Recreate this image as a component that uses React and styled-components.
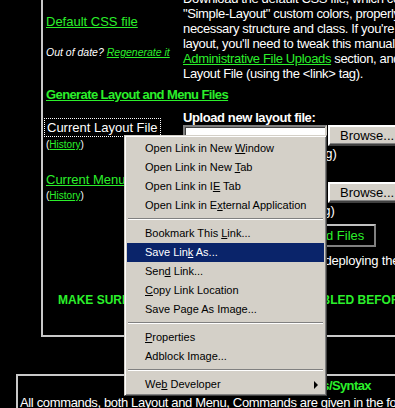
import React from 'react';
import styled, {createGlobalStyle} from 'styled-components';

const green = '#2bef2b';

const Global = createGlobalStyle`
  html, body { margin: 0; padding: 0; background: #000; }
  body {
    width: 395px;
    height: 408px;
    overflow: hidden;
    font-family: "Liberation Sans", Arial, sans-serif;
    font-size: 13px;
    color: #fff;
  }
`;

const Page = styled.div`
  position: relative;
  width: 395px;
  height: 408px;
  overflow: hidden;
`;

const Scroller = styled.div`
  margin-top: -9px;
`;

const Panel = styled.div`
  margin-left: 41px;
  width: 640px;
  border-left: 2px solid #c8c8c8;
  border-bottom: 2px solid #c8c8c8;
  padding: 0 0 27px 3px;
  line-height: 15px;
`;

const Row = styled.div`
  display: grid;
  grid-template-columns: 137px 1fr;
  align-items: ${p => p.$align || 'center'};
  margin-top: ${p => p.$top || 0}px;
`;

const Cell = styled.div`
  display: flex;
  flex-direction: column;
  align-items: flex-start;
  margin-top: ${p => p.$top || 0}px;
`;

const Link = styled.a`
  color: ${green};
  text-decoration: underline;
  cursor: pointer;
`;

const Para = styled.p`
  margin: 0;
  letter-spacing: -0.35px;
`;

const Small = styled.div`
  font-size: ${p => (p.$italic ? 10.5 : 10)}px;
  line-height: 12px;
  margin-top: ${p => p.$top || 0}px;
  font-style: ${p => (p.$italic ? 'italic' : 'normal')};
`;

const Heading = styled.div`
  margin-top: ${p => p.$top || 0}px;
  font-weight: bold;
  letter-spacing: -0.6px;
  padding-left: ${p => p.$indent || 0}px;
  color: ${green};
  text-decoration: ${p => (p.$plain ? 'none' : 'underline')};
`;

const Label = styled.div`
  font-weight: bold;
  letter-spacing: -0.4px;
`;

const FocusLabel = styled.span`
  outline: 1px dotted #fff;
  outline-offset: 1px;
  padding: 0 1px;
`;

const FileField = styled.div`
  display: flex;
  height: 21px;
`;

const FileInput = styled.div`
  box-sizing: border-box;
  width: 144px;
  height: 21px;
  background: #fff;
  border: 2px solid;
  border-color: #808080 #d4d0c8 #d4d0c8 #808080;
  box-shadow: inset 1px 1px 0 #404040;
`;

const Browse = styled.button`
  box-sizing: border-box;
  width: 72px;
  height: 21px;
  margin-left: 1px;
  padding: 0 0 0 10px;
  text-align: left;
  font: 13px "Liberation Sans", Arial, sans-serif;
  color: #000;
  background: #d4d0c8;
  border: 2px solid;
  border-color: #fff #404040 #404040 #fff;
  box-shadow: inset -1px -1px 0 #808080;
`;

const Note = styled.div`
  line-height: 15px;
  letter-spacing: ${p => (p.$tight ? '-0.2px' : 'normal')};
  white-space: nowrap;
`;

const SubmitButton = styled.button`
  box-sizing: border-box;
  margin: 0 0 0 97px;
  height: 23px;
  padding: 0 10px;
  font: 13px "Liberation Sans", Arial, sans-serif;
  color: ${green};
  background: #000;
  border: 2px solid;
  border-color: #c0c0c0 #808080 #808080 #c0c0c0;
`;

const Notice = styled.div`
  margin-top: ${p => p.$top || 0}px;
  padding-left: 12px;
  font-size: 12px;
  font-weight: bold;
  color: ${green};
  white-space: nowrap;
`;

const Panel2 = styled.div`
  margin: 37px 0 0 16px;
  width: 640px;
  border-left: 2px solid #c8c8c8;
  border-top: 2px solid #c8c8c8;
  padding: 2px 0 0 2px;
  line-height: 15px;
`;

const Body = styled.div`
  margin-top: 2px;
  letter-spacing: -0.35px;
  white-space: nowrap;
`;

/* context menu, windows classic style */
const Menu = styled.div`
  position: absolute;
  left: 124px;
  top: 135px;
  width: 203px;
  box-sizing: border-box;
  padding: 3px 1px 1px;
  background: #d4d0c8;
  border: 1px solid;
  border-color: #d4d0c8 #404040 #404040 #d4d0c8;
  box-shadow: inset 1px 1px 0 #fff, inset -1px -1px 0 #808080;
  font-family: Tahoma, "Liberation Sans", Arial, sans-serif;
  font-size: 11px;
  color: #000;
`;

const Item = styled.div`
  position: relative;
  height: 19px;
  line-height: 19px;
  margin: 0 1px;
  padding-left: 18px;
  white-space: nowrap;
  background: ${p => (p.$active ? '#0a246a' : 'transparent')};
  color: ${p => (p.$active ? '#fff' : '#000')};
`;

const Key = styled.span`
  text-decoration: underline;
`;

const Sep = styled.div`
  height: 9px;
  display: flex;
  align-items: flex-start;
  padding-top: 3px;
  box-sizing: border-box;
  margin: 0 2px;
  &::before {
    content: '';
    flex: 1;
    height: 0;
    border-top: 1px solid #808080;
    border-bottom: 1px solid #fff;
  }
`;

const Arrow = styled.span`
  position: absolute;
  right: 6px;
  top: 6px;
  width: 0;
  height: 0;
  border-top: 4px solid transparent;
  border-bottom: 4px solid transparent;
  border-left: 4px solid #000;
`;

const menuItems = [
  ['Open Link in New ', 'W', 'indow'],
  ['Open Link in New ', 'T', 'ab'],
  ['Open Link in I', 'E', ' Tab'],
  ['Open Link in E', 'x', 'ternal Application'],
  'sep',
  ['Bookmark This ', 'L', 'ink...'],
  ['Save Lin', 'k', ' As...', true],
  ['Sen', 'd', ' Link...'],
  ['', 'C', 'opy Link Location'],
  ['Save Page As Image...', '', ''],
  'sep',
  ['', 'P', 'roperties'],
  ['Adblock Image...', '', ''],
  'sep',
  ['We', 'b', ' Developer', false, true],
];

const ContextMenu = () => (
  <Menu>
    {menuItems.map((m, i) =>
      m === 'sep' ? (
        <Sep key={i} />
      ) : (
        <Item key={i} $active={m[3]}>
          {m[0]}
          {m[1] && <Key>{m[1]}</Key>}
          {m[2]}
          {m[4] && <Arrow />}
        </Item>
      )
    )}
  </Menu>
);

export default function App() {
  return (
    <Page>
      <Global />
      <Scroller>
        <Panel>
          <Row>
            <Cell>
              <Link>Default CSS file</Link>
              <Small $top={17} $italic>
                Out of date? <Link>Regenerate it</Link>
              </Small>
            </Cell>
            <Para>
              Download the default CSS file, which contains the
              <br />"Simple-Layout" custom colors, properly formatted
              <br />necessary structure and class. If you're creating
              <br />layout, you'll need to tweak this manually, then
              <br /><Link>Administrative File Uploads</Link> section, and
              <br />Layout File (using the &lt;link&gt; tag).
            </Para>
          </Row>

          <Heading $top={6}>Generate Layout and Menu Files</Heading>

          <Row $top={8}>
            <Cell>
              <FocusLabel>Current Layout File</FocusLabel>
              <Small $top={4}>
                (<Link>History</Link>)
              </Small>
            </Cell>
            <Cell>
              <Label>Upload new layout file:</Label>
              <FileField>
                <FileInput />
                <Browse>Browse...</Browse>
              </FileField>
              <Note>(current: simple-layout.cfg)</Note>
            </Cell>
          </Row>

          <Row $top={6} $align="start">
            <Cell $top={5}>
              <Link>Current Menu File</Link>
              <Small $top={3}>
                (<Link>History</Link>)
              </Small>
            </Cell>
            <Cell>
              <Label>Upload new menu file:</Label>
              <FileField>
                <FileInput />
                <Browse>Browse...</Browse>
              </FileField>
              <Note>(current: simple-menu.cfg)</Note>
            </Cell>
          </Row>

          <Row $top={6}>
            <span />
            <Cell>
              <SubmitButton>Upload Files</SubmitButton>
            </Cell>
          </Row>

          <Row $top={6}>
            <span />
            <Note $tight>Back up your files before deploying the new layout.</Note>
          </Row>

          <Notice $top={25}>
            MAKE SURE THE NEW MENU FILES ARE ENABLED BEFORE SAVING
          </Notice>
        </Panel>

        <Panel2>
          <Heading $plain $indent={142}>Layout and Menu Commands/Syntax</Heading>
          <Body>
            All commands, both Layout and Menu, Commands are given in the following format:
          </Body>
        </Panel2>
      </Scroller>
      <ContextMenu />
    </Page>
  );
}
